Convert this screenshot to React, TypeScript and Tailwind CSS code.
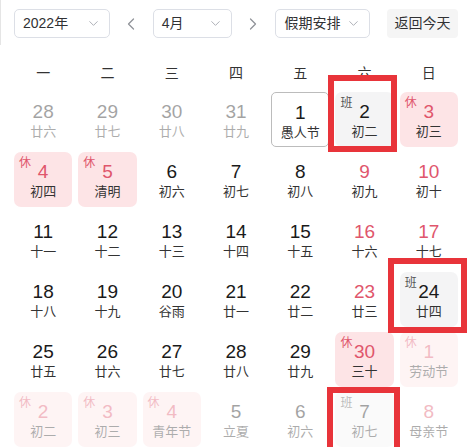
import React from "react";
import { ChevronDown, ChevronLeft, ChevronRight } from "lucide-react";

type Cell = {
  d: number;
  l: string;
  other?: boolean;
  today?: boolean;
  rest?: boolean;
  work?: boolean;
  we?: boolean;
};

const rows: Cell[][] = [
  [
    { d: 28, l: "廿六", other: true },
    { d: 29, l: "廿七", other: true },
    { d: 30, l: "廿八", other: true },
    { d: 31, l: "廿九", other: true },
    { d: 1, l: "愚人节", today: true },
    { d: 2, l: "初二", work: true },
    { d: 3, l: "初三", rest: true },
  ],
  [
    { d: 4, l: "初四", rest: true },
    { d: 5, l: "清明", rest: true },
    { d: 6, l: "初六" },
    { d: 7, l: "初七" },
    { d: 8, l: "初八" },
    { d: 9, l: "初九", we: true },
    { d: 10, l: "初十", we: true },
  ],
  [
    { d: 11, l: "十一" },
    { d: 12, l: "十二" },
    { d: 13, l: "十三" },
    { d: 14, l: "十四" },
    { d: 15, l: "十五" },
    { d: 16, l: "十六", we: true },
    { d: 17, l: "十七", we: true },
  ],
  [
    { d: 18, l: "十八" },
    { d: 19, l: "十九" },
    { d: 20, l: "谷雨" },
    { d: 21, l: "廿一" },
    { d: 22, l: "廿二" },
    { d: 23, l: "廿三", we: true },
    { d: 24, l: "廿四", work: true },
  ],
  [
    { d: 25, l: "廿五" },
    { d: 26, l: "廿六" },
    { d: 27, l: "廿七" },
    { d: 28, l: "廿八" },
    { d: 29, l: "廿九" },
    { d: 30, l: "三十", rest: true },
    { d: 1, l: "劳动节", rest: true, other: true },
  ],
  [
    { d: 2, l: "初二", rest: true, other: true },
    { d: 3, l: "初三", rest: true, other: true },
    { d: 4, l: "青年节", rest: true, other: true },
    { d: 5, l: "立夏", other: true },
    { d: 6, l: "初六", other: true },
    { d: 7, l: "初七", work: true, other: true },
    { d: 8, l: "母亲节", we: true, other: true },
  ],
];

function Select({ label, w }: { label: string; w: string }) {
  return (
    <div
      className={`${w} h-[29px] flex items-center justify-between pl-[8px] pr-[8px] border border-[#dcdfe6] rounded-[5px] bg-white text-[14px] text-[#303133]`}
    >
      <span>{label}</span>
      <ChevronDown size={15} strokeWidth={1.5} color="#a8abb2" />
    </div>
  );
}

function DayCell({ c }: { c: Cell }) {
  let bg = "bg-white";
  if (c.rest) bg = "bg-[#fde4e6]";
  if (c.work) bg = "bg-[#f4f4f5]";
  const border = c.today ? "border border-[#bcbcbc] rounded-[5px]" : "rounded-[7px]";
  const numColor = c.rest || c.we ? "text-[#e0566c]" : "text-[#1a1a1a]";
  return (
    <div
      className={`relative h-[55px] flex flex-col items-center pt-[9px] ${bg} ${border} ${c.other ? "opacity-40" : ""}`}
    >
      {c.rest && (
        <span className="absolute left-[5px] top-[3px] text-[12px] leading-[16px] text-[#e0566c]">休</span>
      )}
      {c.work && (
        <span className="absolute left-[5px] top-[3px] text-[12px] leading-[16px] text-[#555]">班</span>
      )}
      <span className={`text-[19px] leading-[22px] ${numColor}`}>{c.d}</span>
      <span className="text-[13px] leading-[18px] text-[#333]">{c.l}</span>
    </div>
  );
}

export default function App() {
  const weekdays = ["一", "二", "三", "四", "五", "六", "日"];
  return (
    <div
      className="relative w-[472px] h-[447px] overflow-hidden bg-white px-[14px]"
      style={{ fontFamily: '"Liberation Sans", "Noto Sans CJK SC", sans-serif' }}
    >
      <div className="absolute left-0 top-0 w-px h-[45px] bg-[#e5e5e5]" />
      <div className="flex items-center h-[29px] mt-[9px]">
        <Select label="2022年" w="w-[96px]" />
        <div className="w-[43px] flex justify-center">
          <ChevronLeft size={20} strokeWidth={1.5} color="#909399" />
        </div>
        <Select label="4月" w="w-[79px]" />
        <div className="w-[44px] flex justify-center">
          <ChevronRight size={20} strokeWidth={1.5} color="#909399" />
        </div>
        <Select label="假期安排" w="w-[95px]" />
        <div className="ml-[17px] w-[71px] h-[29px] flex items-center justify-center rounded-[4px] bg-[#f5f5f5] text-[14px] text-[#303133]">
          返回今天
        </div>
      </div>
      <div className="grid grid-cols-7 gap-x-[6px] mt-[21px] h-[28px] items-center text-[14px] text-[#333]">
        {weekdays.map((w) => (
          <div key={w} className="text-center">
            {w}
          </div>
        ))}
      </div>
      <div className="grid grid-cols-7 gap-x-[6px] gap-y-[5px] mt-[5px]">
        {rows.flat().map((c, i) => (
          <DayCell key={i} c={c} />
        ))}
      </div>
      <div className="absolute left-[328px] top-[75px] w-[69px] h-[77px] border-[6px] border-[#e8343a] pointer-events-none" />
      <div className="absolute left-[388px] top-[258px] w-[79px] h-[75px] border-[6px] border-[#e8343a] pointer-events-none" />
      <div className="absolute left-[327px] top-[387px] w-[73px] h-[72px] border-[6px] border-[#e8343a] pointer-events-none" />
    </div>
  );
}
